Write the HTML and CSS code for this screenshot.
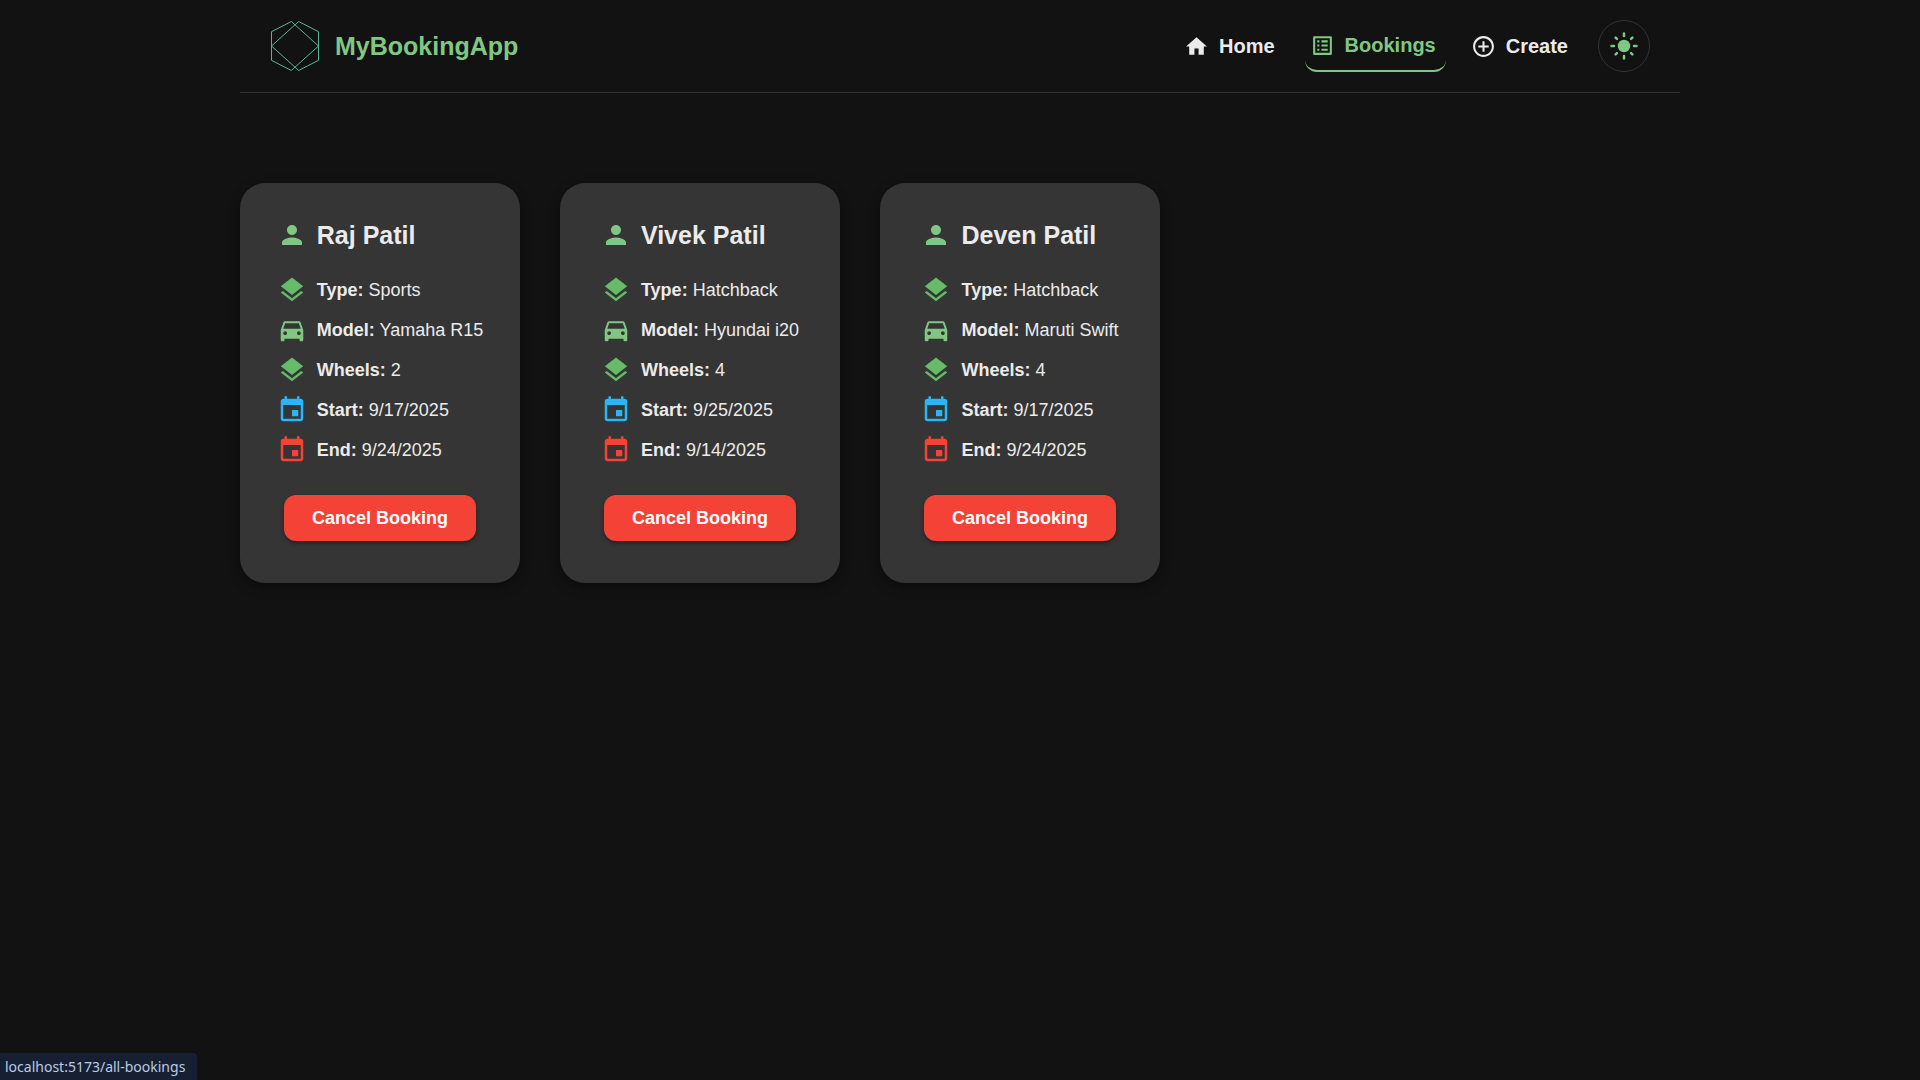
FILE: index.html
```html
<!DOCTYPE html>
<html lang="en">
<head>
<meta charset="utf-8">
<meta name="viewport" content="width=device-width, initial-scale=1">
<title>MyBookingApp</title>
<link rel="stylesheet" href="styles.css">
</head>
<body>
<svg class="sprite" aria-hidden="true">
  <symbol id="person" viewBox="0 0 24 24"><path d="M12 12c2.21 0 4-1.79 4-4s-1.79-4-4-4-4 1.79-4 4 1.79 4 4 4zm0 2c-2.67 0-8 1.34-8 4v2h16v-2c0-2.66-5.33-4-8-4z"/></symbol>
  <symbol id="layers" viewBox="0 0 24 24"><path d="M11.99 18.54l-7.37-5.73L3 14.07l9 7 9-7-1.63-1.27-7.38 5.74zM12 16l7.36-5.73L21 9l-9-7-9 7 1.63 1.27L12 16z"/></symbol>
  <symbol id="car" viewBox="0 0 24 24"><path d="M18.92 6.01C18.72 5.42 18.16 5 17.5 5h-11c-.66 0-1.21.42-1.42 1.01L3 12v8c0 .55.45 1 1 1h1c.55 0 1-.45 1-1v-1h12v1c0 .55.45 1 1 1h1c.55 0 1-.45 1-1v-8l-2.08-5.99zM6.5 16c-.83 0-1.5-.67-1.5-1.5S5.67 13 6.5 13s1.5.67 1.5 1.5S7.33 16 6.5 16zm11 0c-.83 0-1.5-.67-1.5-1.5s.67-1.5 1.5-1.5 1.5.67 1.5 1.5-.67 1.5-1.5 1.5zM5 11l1.5-4.5h11L19 11H5z"/></symbol>
  <symbol id="event" viewBox="0 0 24 24"><path d="M17 12h-5v5h5v-5zM16 1v2H8V1H6v2H5c-1.11 0-1.99.9-1.99 2L3 19c0 1.1.89 2 2 2h14c1.1 0 2-.9 2-2V5c0-1.1-.9-2-2-2h-1V1h-2zm3 18H5V8h14v11z"/></symbol>
</svg>

<div class="container">
  <header class="header">
    <a class="brand" href="#">
      <svg class="logo" viewBox="0 0 50 50" aria-hidden="true"><path d="M21.3.5L1.5 10.7v28.6l19.8 10.2L48.5 25zM28.7.5l19.8 10.2v28.6L28.7 49.5 1.5 25z"/></svg>
      <span>MyBookingApp</span>
    </a>
    <nav class="nav">
      <a class="nav-link" href="#"><svg class="nav-icon" viewBox="0 0 24 24" aria-hidden="true"><path d="M10 20v-6h4v6h5v-8h3L12 3 2 12h3v8z"/></svg>Home</a>
      <a class="nav-link active" href="#"><svg class="nav-icon" viewBox="0 0 24 24" aria-hidden="true"><path d="M19 5v14H5V5h14m1.1-2H3.9c-.5 0-.9.4-.9.9v16.2c0 .4.4.9.9.9h16.2c.4 0 .9-.5.9-.9V3.9c0-.5-.5-.9-.9-.9zM11 7h6v2h-6V7zm0 4h6v2h-6v-2zm0 4h6v2h-6zM7 7h2v2H7zm0 4h2v2H7zm0 4h2v2H7z"/></svg>Bookings</a>
      <a class="nav-link" href="#"><svg class="nav-icon" viewBox="0 0 24 24" aria-hidden="true"><path d="M13 7h-2v4H7v2h4v4h2v-4h4v-2h-4V7zm-1-5C6.48 2 2 6.48 2 12s4.48 10 10 10 10-4.48 10-10S17.52 2 12 2zm0 18c-4.41 0-8-3.59-8-8s3.59-8 8-8 8 3.59 8 8-3.59 8-8 8z"/></svg>Create</a>
      <button class="theme-toggle" type="button" aria-label="Toggle theme">
        <svg class="icon sun" viewBox="0 0 24 24" aria-hidden="true"><circle cx="12" cy="12" r="5"/><path d="M12 2v2M12 20v2M2 12h2M20 12h2M5.28 5.28l1.06 1.06M17.66 17.66l1.06 1.06M5.28 18.72l1.06-1.06M17.66 6.34l1.06-1.06"/></svg>
      </button>
    </nav>
  </header>

  <main class="cards">
    <article class="card">
      <div class="details">
        <h2 class="name"><svg class="icon green"><use href="#person"/></svg>Raj Patil</h2>
        <ul class="rows">
          <li class="row"><svg class="icon leaf"><use href="#layers"/></svg><span><strong>Type:</strong> Sports</span></li>
          <li class="row"><svg class="icon green"><use href="#car"/></svg><span><strong>Model:</strong> Yamaha R15</span></li>
          <li class="row"><svg class="icon leaf"><use href="#layers"/></svg><span><strong>Wheels:</strong> 2</span></li>
          <li class="row"><svg class="icon blue"><use href="#event"/></svg><span><strong>Start:</strong> 9/17/2025</span></li>
          <li class="row"><svg class="icon red"><use href="#event"/></svg><span><strong>End:</strong> 9/24/2025</span></li>
        </ul>
      </div>
      <button class="cancel" type="button">Cancel Booking</button>
    </article>
    <article class="card">
      <div class="details">
        <h2 class="name"><svg class="icon green"><use href="#person"/></svg>Vivek Patil</h2>
        <ul class="rows">
          <li class="row"><svg class="icon leaf"><use href="#layers"/></svg><span><strong>Type:</strong> Hatchback</span></li>
          <li class="row"><svg class="icon green"><use href="#car"/></svg><span><strong>Model:</strong> Hyundai i20</span></li>
          <li class="row"><svg class="icon leaf"><use href="#layers"/></svg><span><strong>Wheels:</strong> 4</span></li>
          <li class="row"><svg class="icon blue"><use href="#event"/></svg><span><strong>Start:</strong> 9/25/2025</span></li>
          <li class="row"><svg class="icon red"><use href="#event"/></svg><span><strong>End:</strong> 9/14/2025</span></li>
        </ul>
      </div>
      <button class="cancel" type="button">Cancel Booking</button>
    </article>
    <article class="card">
      <div class="details">
        <h2 class="name"><svg class="icon green"><use href="#person"/></svg>Deven Patil</h2>
        <ul class="rows">
          <li class="row"><svg class="icon leaf"><use href="#layers"/></svg><span><strong>Type:</strong> Hatchback</span></li>
          <li class="row"><svg class="icon green"><use href="#car"/></svg><span><strong>Model:</strong> Maruti Swift</span></li>
          <li class="row"><svg class="icon leaf"><use href="#layers"/></svg><span><strong>Wheels:</strong> 4</span></li>
          <li class="row"><svg class="icon blue"><use href="#event"/></svg><span><strong>Start:</strong> 9/17/2025</span></li>
          <li class="row"><svg class="icon red"><use href="#event"/></svg><span><strong>End:</strong> 9/24/2025</span></li>
        </ul>
      </div>
      <button class="cancel" type="button">Cancel Booking</button>
    </article>
  </main>
</div>

<div class="status">localhost:5173/all-bookings</div>
</body>
</html>
```
FILE: styles.css
```css
* { box-sizing: border-box; }

body {
  margin: 0;
  min-height: 100vh;
  background: #121212;
  color: #ebebeb;
  font: 18px/30px "Liberation Sans", Arial, sans-serif;
}

a { color: inherit; text-decoration: none; }

.sprite { display: none; }

.container {
  width: 75%;
  margin: 0 auto;
}

.header {
  display: flex;
  align-items: center;
  justify-content: space-between;
  padding: 20px 30px;
  border-bottom: 1px solid #333;
}

.brand {
  display: flex;
  align-items: center;
  gap: 15px;
  color: #81c784;
  font-size: 25px;
  font-weight: bold;
}

.logo {
  width: 50px;
  height: 50px;
  fill: none;
  stroke: #56b898;
}

.nav {
  display: flex;
  gap: 20px;
}

.nav-link {
  display: flex;
  align-items: center;
  gap: 10px;
  padding: 0 10px 0 5px;
  font-size: 20px;
  font-weight: bold;
}

.nav-link.active {
  color: #81c784;
  border-bottom: 2px solid #81c784;
  border-radius: 12px;
}

.nav-icon {
  width: 25px;
  height: 25px;
  fill: currentColor;
}

.theme-toggle {
  display: flex;
  align-items: center;
  justify-content: center;
  width: 52px;
  height: 52px;
  padding: 0;
  background: none;
  border: 1px solid #333;
  border-radius: 50%;
  color: #81c784;
}

.icon {
  flex: none;
  width: 30px;
  height: 30px;
  fill: currentColor;
}

.sun path {
  stroke: currentColor;
  stroke-width: 2;
  stroke-linecap: round;
}

.green { color: #81c784; }
.leaf { color: #66bb6a; }
.blue { color: #29b6f6; }
.red { color: #f44336; }

.cards {
  display: flex;
  flex-wrap: wrap;
  gap: 40px;
  padding: 90px 0;
}

.card {
  display: flex;
  flex-direction: column;
  align-items: center;
  gap: 30px;
  width: 280px;
  padding: 37px 0 42px;
  background: #353535;
  border-radius: 25px;
  box-shadow: 0 4px 12px rgba(0, 0, 0, 0.4);
}

.name {
  display: flex;
  align-items: center;
  gap: 10px;
  margin: 0 0 25px;
  font-size: 25px;
}

.rows {
  display: flex;
  flex-direction: column;
  gap: 10px;
  margin: 0;
  padding: 0;
  list-style: none;
}

.row {
  display: flex;
  align-items: center;
  gap: 10px;
}

.cancel {
  padding: 8px 28px;
  background: #f44336;
  border: 0;
  border-radius: 12px;
  box-shadow: 0 2px 4px rgba(0, 0, 0, 0.4);
  color: #fff;
  font: bold 18px/30px "Liberation Sans", Arial, sans-serif;
}

.status {
  position: fixed;
  bottom: 0;
  left: 0;
  padding: 0 12px 0 5px;
  background: #172033;
  border-top-right-radius: 4px;
  color: #b9cbe2;
  font: 14px/27px "Noto Sans", sans-serif;
}
```
